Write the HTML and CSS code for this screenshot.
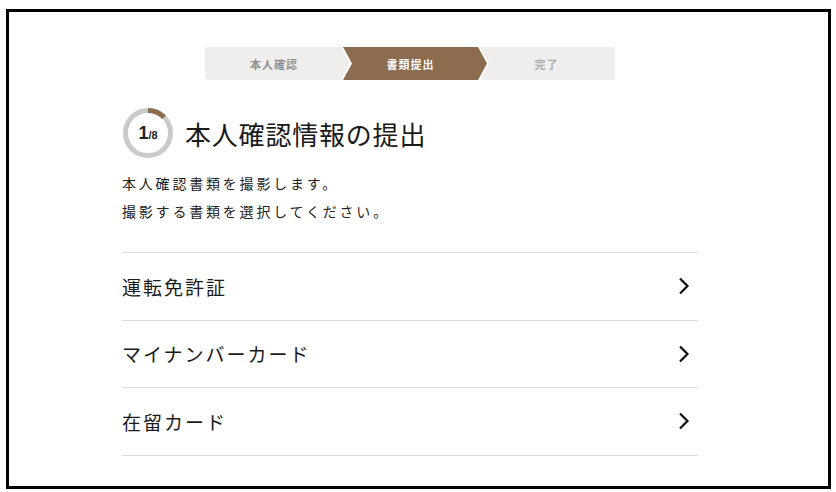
FILE: index.html
```html
<!DOCTYPE html>
<html>
<head>
<meta charset="utf-8" />
<title>本人確認情報の提出</title>
<meta name="viewport" content="width=device-width,initial-scale=1" />
<link rel="stylesheet" href="styles.css">
</head>
<body>
	<div id="frame">
		<div id="content">
			<div class="steps">
				<div class="step step-done">本人確認</div>
				<div class="step-cur-wrap">
					<div class="step step-cur">書類提出</div>
				</div>
				<div class="step step-todo">完了</div>
			</div>
			<div class="heading">
				<div class="progress">
					<svg width="52" height="52" viewBox="0 0 52 52">
						<circle cx="26" cy="26" r="22.5" fill="none" stroke="#cacaca" stroke-width="5" />
						<circle cx="26" cy="26" r="22.5" fill="none" stroke="#8b6c4f" stroke-width="5" stroke-dasharray="17.7 200" transform="rotate(-90 26 26)" />
					</svg>
					<span class="progress-num"><b>1</b><small>/8</small></span>
				</div>
				<h1>本人確認情報の提出</h1>
			</div>
			<p class="lead">本人確認書類を撮影します。<br>撮影する書類を選択してください。</p>
			<ul class="docs">
				<li><span>運転免許証</span><svg class="arrow" width="14" height="20" viewBox="0 0 14 20"><path d="M3 2.5 L10.5 10 L3 17.5" fill="none" stroke="#111" stroke-width="2.2" /></svg></li>
				<li><span>マイナンバーカード</span><svg class="arrow" width="14" height="20" viewBox="0 0 14 20"><path d="M3 2.5 L10.5 10 L3 17.5" fill="none" stroke="#111" stroke-width="2.2" /></svg></li>
				<li><span>在留カード</span><svg class="arrow" width="14" height="20" viewBox="0 0 14 20"><path d="M3 2.5 L10.5 10 L3 17.5" fill="none" stroke="#111" stroke-width="2.2" /></svg></li>
			</ul>
		</div>
	</div>
</body>
</html>
```

FILE: styles.css
```css
* {
	margin: 0;
	padding: 0;
	box-sizing: border-box;
}
html,body {
	width: 100%;
	height: 100%;
	overflow: hidden;
	background: #fff;
}
body {
	font-family: "Noto Sans CJK JP", "Noto Sans", sans-serif;
	color: #222;
}
#frame {
	margin: 9px 0 0 6px;
	width: 825px;
	height: 480px;
	border: 3px solid #000;
	padding: 0 0 0 113px;
}
#content {
	width: 576px;
	padding-top: 35px;
}
.steps {
	display: flex;
	width: 410px;
	height: 33px;
	margin: 0 auto;
	background: #efeeed;
	border-radius: 3px;
	overflow: hidden;
}
.step {
	display: flex;
	align-items: center;
	justify-content: center;
	font-size: 11px;
	font-weight: bold;
	letter-spacing: 1px;
	color: #8e8e8e;
}
.step-done {
	width: 138px;
}
.step-cur-wrap {
	position: relative;
	z-index: 1;
	width: 148px;
	margin: 0 -11px 0 -2px;
	background: #fff;
	clip-path: polygon(0 0, 139px 0, 148px 50%, 139px 100%, 0 100%, 9px 50%);
}
.step-cur {
	width: 144px;
	height: 100%;
	margin-left: 2px;
	padding-right: 9px;
	background: #8b6c4f;
	color: #fff;
	clip-path: polygon(0 0, 135px 0, 144px 50%, 135px 100%, 0 100%, 9px 50%);
}
.step-todo {
	flex: 1;
	color: #acacac;
}
.heading {
	display: flex;
	align-items: center;
	margin-top: 27px;
}
.progress {
	position: relative;
	width: 52px;
	height: 52px;
}
.progress svg {
	display: block;
}
.progress-num {
	position: absolute;
	top: 0;
	left: 0;
	width: 100%;
	height: 100%;
	display: flex;
	align-items: center;
	justify-content: center;
	font-family: "Liberation Sans", sans-serif;
	font-weight: bold;
	color: #222;
}
.progress-num b {
	font-size: 18px;
}
.progress-num small {
	font-size: 11px;
	margin-top: 4px;
}
h1 {
	margin-left: 11px;
	font-size: 26px;
	font-weight: normal;
	letter-spacing: 0.8px;
	color: #1a1a1a;
}
.lead {
	margin-top: 10px;
	font-size: 14px;
	line-height: 28px;
	letter-spacing: 2.8px;
	color: #222;
}
.docs {
	list-style: none;
	margin-top: 27px;
	border-top: 1px solid #dcdcdc;
}
.docs li {
	display: flex;
	align-items: center;
	justify-content: space-between;
	height: 67.5px;
	padding-right: 7px;
	border-bottom: 1px solid #dcdcdc;
	font-size: 19px;
	letter-spacing: 2px;
	color: #1a1a1a;
}
.arrow {
	display: block;
}
```
